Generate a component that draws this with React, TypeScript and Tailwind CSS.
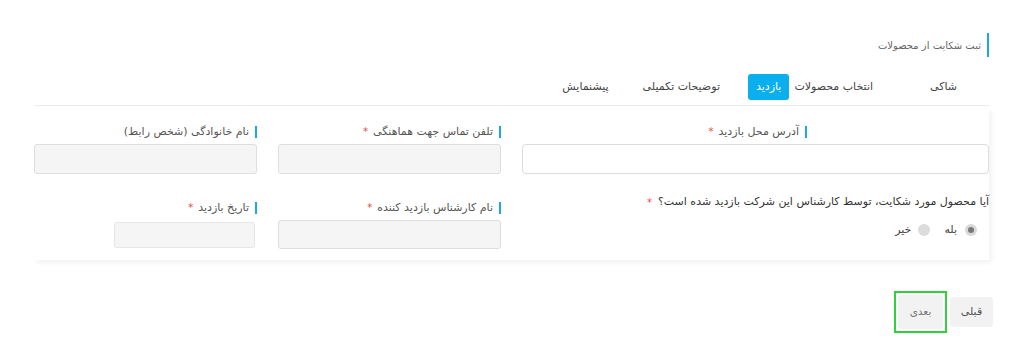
import React from "react";

const Label = ({ text, req, mr = 0 }: { text: string; req?: boolean; mr?: number }) => (
  <div className="flex h-[14px] items-center" style={mr ? { marginRight: mr } : undefined}>
    <span className="border-r-2 border-[#1ea7e4] pr-[6px] text-[11px] leading-[12px] text-[#555]">{text}</span>
    {req && <span className="mr-[5px] text-[10px] leading-[12px] text-[#e74c3c]">*</span>}
  </div>
);

export default function App() {
  return (
    <div dir="rtl" className="h-[362px] w-[1024px] overflow-hidden bg-white font-['DejaVu_Sans',sans-serif] text-[#555]">
      <div className="pl-[34px] pr-[35px] pt-[33px]">
        <div className="flex h-[24px] items-center border-r-2 border-[#1ea7e4] pr-[6px] text-[10px] text-[#666]">
          ثبت شکایت از محصولات
        </div>

        <div className="mt-[17px] flex items-center border-b border-[#ececec] pb-[5px] pr-[32px] text-[11px] text-[#444]">
          <div className="flex h-[26px] items-center">شاکی</div>
          <div className="mr-[57px] flex h-[26px] items-center">انتخاب محصولات</div>
          <div className="mr-[5px] flex h-[26px] items-center rounded-[3px] bg-[#0aafee] px-[8px] text-white">بازدید</div>
          <div className="mr-[28px] flex h-[26px] items-center">توضیحات تکمیلی</div>
          <div className="mr-[34px] flex h-[26px] items-center">پیشنمایش</div>
        </div>

        <div className="mt-[2px] h-[152px] shadow-[3px_3px_5px_rgba(0,0,0,0.05)]">
          <div className="grid grid-cols-[467px_223px_223px] gap-x-[21px] pt-[17px]">
            <div>
              <Label text="آدرس محل بازدید" req mr={182} />
              <div className="mt-[5px] h-[30px] rounded-[4px] border border-[#dcdcdc] bg-white" />
            </div>
            <div>
              <Label text="تلفن تماس جهت هماهنگی" req />
              <div className="mt-[5px] h-[30px] rounded-[3px] border border-[#dedede] bg-[#f5f5f5]" />
            </div>
            <div>
              <Label text="نام خانوادگی (شخص رابط)" />
              <div className="mt-[5px] h-[30px] rounded-[3px] border border-[#dedede] bg-[#f5f5f5]" />
            </div>
          </div>

          <div className="mt-[27px] grid grid-cols-[467px_223px_223px] gap-x-[21px]">
            <div className="-mt-[7px]">
              <div className="flex h-[16px] items-center text-[11px] text-[#333]">
                <span>آیا محصول مورد شکایت، توسط کارشناس این شرکت بازدید شده است؟</span>
                <span className="mr-[6px] text-[10px] text-[#e74c3c]">*</span>
              </div>
              <div className="mt-[14px] flex h-[12px] items-center pr-[12px] text-[11px] text-[#444]">
                <span className="flex h-[12px] w-[12px] items-center justify-center rounded-full bg-[#d9d9d9]">
                  <span className="h-[6px] w-[6px] rounded-full bg-[#777]" />
                </span>
                <span className="mr-[8px]">بله</span>
                <span className="mr-[14px] h-[12px] w-[12px] rounded-full bg-[#dcdcdc]" />
                <span className="mr-[7px]">خیر</span>
              </div>
            </div>
            <div>
              <Label text="نام کارشناس بازدید کننده" req />
              <div className="mt-[5px] h-[29px] rounded-[3px] border border-[#dedede] bg-[#f5f5f5]" />
            </div>
            <div>
              <Label text="تاریخ بازدید" req />
              <div className="mr-[2px] mt-[7px] h-[26px] w-[141px] rounded-[3px] border border-[#e6e6e6] bg-[#f5f5f5]" />
            </div>
          </div>
        </div>

        <div className="mt-[31px] flex items-center">
          <div className="-mr-[4px] flex h-[30px] w-[43px] items-center justify-center rounded-[3px] bg-[#f2f2f2] text-[11px] text-[#555]">
            قبلی
          </div>
          <div className="mr-[3px] flex h-[42px] w-[53px] items-center justify-center border-2 border-[#2fd23a] bg-white">
            <div className="flex h-[34px] w-[45px] items-center justify-center rounded-[2px] bg-[#f2f2f2] text-[10.5px] text-[#777]">
              بعدی
            </div>
          </div>
        </div>
      </div>
    </div>
  );
}
